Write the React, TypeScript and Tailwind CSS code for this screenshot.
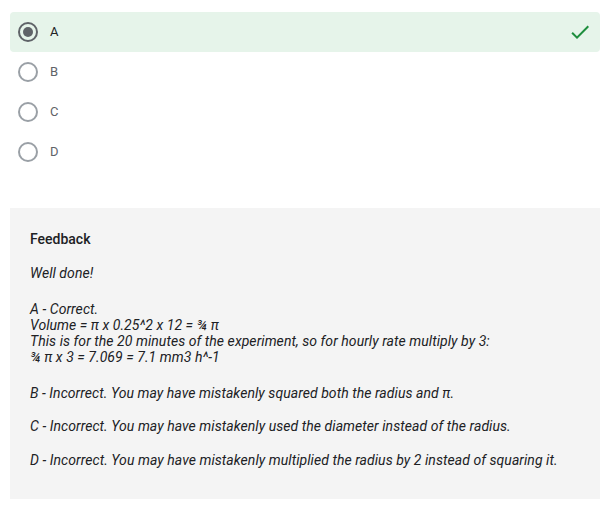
import React from "react";

function Radio({ checked }: { checked: boolean }) {
  return (
    <svg width="20" height="20" viewBox="0 0 20 20" className="shrink-0">
      <circle cx="10" cy="10" r="9" fill="none" stroke={checked ? "#5f6368" : "#9aa0a6"} strokeWidth="2" />
      {checked && <circle cx="10" cy="10" r="5" fill="#5f6368" />}
    </svg>
  );
}

export default function App() {
  const opts = ["A", "B", "C", "D"];
  return (
    <div className="w-[610px] h-[510px] bg-white px-[10px] pt-[12px]" style={{ fontFamily: "Roboto, sans-serif" }}>
      <div className="flex flex-col">
        {opts.map((o, i) => (
          <div
            key={o}
            className={`flex items-center h-[40px] pl-[8px] pr-[8px] rounded-[4px] ${i === 0 ? "bg-[#e6f4ea]" : ""}`}
          >
            <Radio checked={i === 0} />
            <span className={`ml-[12px] text-[13px] ${i === 0 ? "text-[#202124]" : "text-[#5f6368]"}`}>{o}</span>
            {i === 0 && (
              <svg className="ml-auto" width="24" height="24" viewBox="0 0 24 24">
                <path d="M9 16.17L4.83 12l-1.42 1.41L9 19 21 7l-1.41-1.41z" fill="#1e8e3e" />
              </svg>
            )}
          </div>
        ))}
      </div>
      <div className="mt-[36px] bg-[#f4f4f4] h-[291px] px-[20px] pt-[21px] text-[14px] text-[#202124]">
        <div className="font-medium leading-[20px]">Feedback</div>
        <div className="italic leading-[16px] mt-[16px] tracking-[0.06px]">
          <p>Well done!</p>
          <p className="mt-[20px]">A - Correct.</p>
          <p>Volume = π x 0.25^2 x 12 = ¾ π</p>
          <p>This is for the 20 minutes of the experiment, so for hourly rate multiply by 3:</p>
          <p>¾ π x 3 = 7.069 = 7.1 mm3 h^-1</p>
          <p className="mt-[20px]">B - Incorrect. You may have mistakenly squared both the radius and π.</p>
          <p className="mt-[17px]">C - Incorrect. You may have mistakenly used the diameter instead of the radius.</p>
          <p className="mt-[18px]">D - Incorrect. You may have mistakenly multiplied the radius by 2 instead of squaring it.</p>
        </div>
      </div>
    </div>
  );
}
